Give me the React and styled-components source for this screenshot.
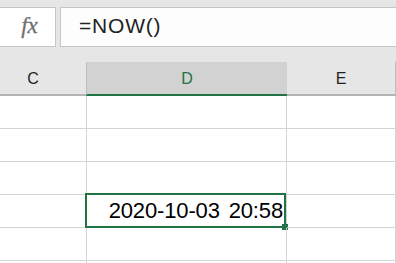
import React from "react";
import styled, { createGlobalStyle } from "styled-components";

const Global = createGlobalStyle`
  html, body { margin: 0; padding: 0; background: #ffffff; }
  body { font-family: "Liberation Sans", Arial, sans-serif; }
`;

const Page = styled.div`
  width: 396px;
  height: 263px;
  overflow: hidden;
  display: flex;
  flex-direction: column;
  background: #ffffff;
`;

const FormulaBar = styled.div`
  flex-shrink: 0;
  display: flex;
  gap: 4px;
  padding: 7px 0 15px 0;
  background: #e6e6e6;
  height: 40px;
`;

const FxBox = styled.div`
  width: 57px;
  margin-left: -1px;
  box-sizing: border-box;
  background: #ffffff;
  border: 1px solid #c6c6c6;
  display: flex;
  align-items: center;
  justify-content: center;
  font-family: "Liberation Serif", "DejaVu Serif", serif;
  font-style: italic;
  font-size: 23px;
  color: #707070;
  -webkit-text-stroke: 0.3px #707070;
  padding-left: 4px;
  padding-bottom: 2px;
`;

const FormulaInput = styled.div`
  flex: 1;
  box-sizing: border-box;
  background: #fdfdfd;
  border: 1px solid #c6c6c6;
  border-right: none;
  display: flex;
  align-items: center;
  padding-left: 18px;
  padding-bottom: 2px;
  font-size: 21px;
  color: #222222;
  letter-spacing: 0.8px;
`;

const Grid = styled.div`
  flex-shrink: 0;
  display: grid;
  grid-template-columns: 87px 200px 109px;
  grid-auto-rows: 33px;
`;

const HeaderRow = styled.div`
  flex-shrink: 0;
  display: grid;
  grid-template-columns: 87px 200px 109px;
  background: #e6e6e6;
`;

const Header = styled.div`
  height: 34px;
  box-sizing: border-box;
  display: flex;
  align-items: center;
  justify-content: center;
  font-size: 16px;
  padding-top: 2px;
  background: ${(p) => (p.$selected ? "#d2d2d2" : "#e6e6e6")};
  color: ${(p) => (p.$selected ? "#217346" : "#1e1e1e")};
  border-bottom: 2px solid ${(p) => (p.$selected ? "#217346" : "#b4b4b4")};
  border-right: ${(p) => (p.$edge ? "1px solid #bdbdbd" : "none")};
  border-left: ${(p) => (p.$selected ? "1px solid #bdbdbd" : "none")};
  margin-left: ${(p) => (p.$selected ? "-1px" : "0")};
  padding-right: ${(p) => p.$shift || 0}px;
`;

const Cell = styled.div`
  position: relative;
  box-sizing: border-box;
  border-right: 1px solid #d4d4d4;
  border-bottom: 1px solid #d4d4d4;
  display: flex;
  align-items: center;
  justify-content: flex-end;
  padding-right: 3px;
  font-size: 22px;
  word-spacing: 3px;
  letter-spacing: -0.15px;
  color: #000000;
  white-space: pre;
`;

const Selection = styled.div`
  position: absolute;
  top: -2px;
  left: -2px;
  right: 0;
  bottom: -1px;
  border: 2px solid #217346;
  pointer-events: none;
`;

const FillHandle = styled.div`
  position: absolute;
  right: -4px;
  bottom: -4px;
  width: 6px;
  height: 6px;
  background: #217346;
`;

export default function App() {
  const rows = 6;
  const cells = [];
  for (let r = 0; r < rows; r++) {
    for (let c = 0; c < 3; c++) {
      const active = r === 3 && c === 1;
      cells.push(
        <Cell key={`${r}-${c}`}>
          {active && "2020-10-03 20:58"}
          {active && (
            <Selection>
              <FillHandle />
            </Selection>
          )}
        </Cell>
      );
    }
  }
  return (
    <Page>
      <Global />
      <FormulaBar>
        <FxBox>fx</FxBox>
        <FormulaInput>=NOW()</FormulaInput>
      </FormulaBar>
      <HeaderRow>
        <Header $shift={21}>C</Header>
        <Header $selected>D</Header>
        <Header $edge>E</Header>
      </HeaderRow>
      <Grid>{cells}</Grid>
    </Page>
  );
}
